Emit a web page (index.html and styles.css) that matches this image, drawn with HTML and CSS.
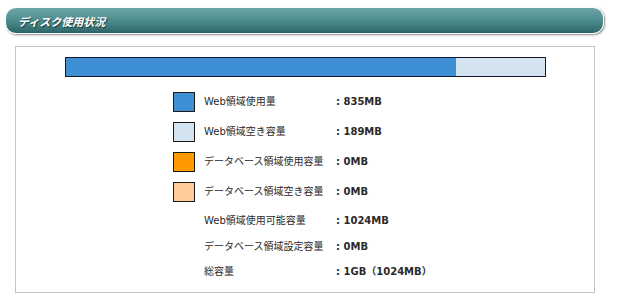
FILE: index.html
```html
<!DOCTYPE html>
<html lang="ja">
  <head>
    <meta charset="UTF-8" />
    <meta name="viewport" content="width=device-width, initial-scale=1.0" />
    <title>ディスク使用状況</title>
    <link rel="stylesheet" href="styles.css">
  </head>
  <body>
    <main>
      <h2 class="section_title">ディスク使用状況</h2>
      <div class="usage_box">
        <div class="usage_bar">
          <div class="usage_used" style="width: 81.5%"></div>
        </div>
        <div class="legend">
          <div class="legend_row">
            <span class="swatch swatch_web_used"></span>
            <span class="legend_label">Web領域使用量</span>
            <span class="legend_value">: 835MB</span>
          </div>
          <div class="legend_row">
            <span class="swatch swatch_web_free"></span>
            <span class="legend_label">Web領域空き容量</span>
            <span class="legend_value">: 189MB</span>
          </div>
          <div class="legend_row">
            <span class="swatch swatch_db_used"></span>
            <span class="legend_label">データベース領域使用容量</span>
            <span class="legend_value">: 0MB</span>
          </div>
          <div class="legend_row">
            <span class="swatch swatch_db_free"></span>
            <span class="legend_label">データベース領域空き容量</span>
            <span class="legend_value">: 0MB</span>
          </div>
          <div class="legend_row text_row first_text_row">
            <span></span>
            <span class="legend_label">Web領域使用可能容量</span>
            <span class="legend_value">: 1024MB</span>
          </div>
          <div class="legend_row text_row">
            <span></span>
            <span class="legend_label">データベース領域設定容量</span>
            <span class="legend_value">: 0MB</span>
          </div>
          <div class="legend_row text_row">
            <span></span>
            <span class="legend_label">総容量</span>
            <span class="legend_value">: 1GB（1024MB）</span>
          </div>
        </div>
      </div>
    </main>
  </body>
</html>
```

FILE: styles.css
```css
body {
  margin: 0;
  background-color: #ffffff;

  --teal_light: #6ea5a7;
  --teal: #4a8a8c;
  --teal_dark: #2c6466;
  --used_blue: #3f8fd5;
  --free_blue: #d3e3f0;
  --db_orange: #ff9900;
  --db_peach: #ffcc99;
  --text: #2b2b2b;

  font-family: "DejaVu Sans", "Noto Sans CJK JP", sans-serif;
  color: var(--text);
}

main {
  padding: 7px 0 0 5px;
}

.section_title {
  width: 599px;
  height: 27px;
  margin: 0;
  box-sizing: border-box;
  padding: 0 12px;
  display: flex;
  align-items: center;
  border-radius: 11px;
  border: 1px solid #ffffff;
  background: linear-gradient(to bottom, var(--teal_light) 0%, var(--teal) 55%, var(--teal_dark) 100%);
  box-shadow: 1px 1px 2px rgba(0, 0, 0, 0.45);
  color: #ffffff;
  font-family: "Noto Sans CJK JP", sans-serif;
  font-size: 11px;
  font-weight: bold;
  font-style: italic;
  text-shadow: 1px 1px 1px rgba(0, 0, 0, 0.5);
}

.usage_box {
  width: 580px;
  height: 247px;
  margin: 12px 0 0 10px;
  box-sizing: border-box;
  border: 1px solid #c4c4c4;
  padding: 10px 0 0 49px;
}

.usage_bar {
  width: 481px;
  height: 20px;
  box-sizing: border-box;
  border: 1px solid #15172a;
  background-color: var(--free_blue);
  display: flex;
}

.usage_used {
  height: 100%;
  background-color: var(--used_blue);
}

.legend {
  margin: 10px 0 0 108px;
  display: grid;
  grid-template-columns: 31px 132px auto;
}

.legend_row {
  display: contents;
}

.legend_row > * {
  height: 30px;
  display: flex;
  align-items: center;
  line-height: 1;
}

.legend_row.text_row > * {
  height: 25px;
}

.legend_row.first_text_row > * {
  height: 27px;
}

.swatch::before {
  content: "";
  width: 20px;
  height: 18px;
  border: 1px solid #1a1a1a;
  background-color: var(--swatch);
}

.swatch_web_used { --swatch: var(--used_blue); }
.swatch_web_free { --swatch: var(--free_blue); }
.swatch_db_used { --swatch: var(--db_orange); }
.swatch_db_free { --swatch: var(--db_peach); }

.legend_label {
  font-size: 10px;
  white-space: nowrap;
}

.legend_value {
  font-size: 10px;
  font-weight: bold;
  white-space: nowrap;
}
```
